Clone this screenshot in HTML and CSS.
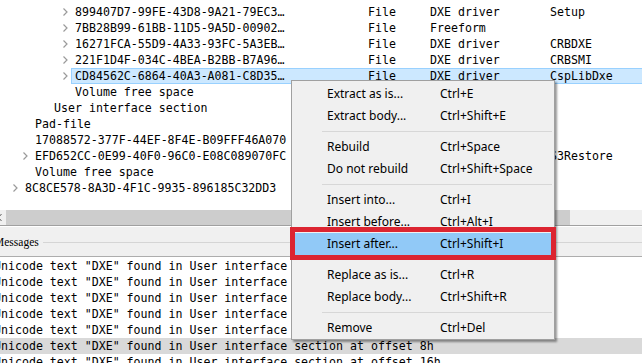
FILE: index.html
```html
<!DOCTYPE html>
<html lang="en">
<head>
    <meta charset="UTF-8">
    <title>UEFITool</title>
    <link rel="stylesheet" href="styles.css">
</head>
<body>
    <div class="tree">
        <div class="rows">
            <div class="row"><div class="name l3"><span class="arrow"><svg width="8" height="16"><polyline points="0.5,4.5 4,8 0.5,11.5"/></svg></span><span class="label"></span></div><div class="cell"></div><div class="cell"></div><div class="cell"></div><div class="cell"></div></div>
            <div class="row"><div class="name l3"><span class="arrow"><svg width="8" height="16"><polyline points="0.5,4.5 4,8 0.5,11.5"/></svg></span><span class="label">899407D7-99FE-43D8-9A21-79EC328CAC21</span></div><div class="cell"></div><div class="cell">File</div><div class="cell">DXE driver</div><div class="cell">Setup</div></div>
            <div class="row"><div class="name l3"><span class="arrow"><svg width="8" height="16"><polyline points="0.5,4.5 4,8 0.5,11.5"/></svg></span><span class="label">7BB28B99-61BB-11D5-9A5D-0090273FC14D</span></div><div class="cell"></div><div class="cell">File</div><div class="cell">Freeform</div><div class="cell"></div></div>
            <div class="row"><div class="name l3"><span class="arrow"><svg width="8" height="16"><polyline points="0.5,4.5 4,8 0.5,11.5"/></svg></span><span class="label">16271FCA-55D9-4A33-93FC-5A3EB128DEB6</span></div><div class="cell"></div><div class="cell">File</div><div class="cell">DXE driver</div><div class="cell">CRBDXE</div></div>
            <div class="row"><div class="name l3"><span class="arrow"><svg width="8" height="16"><polyline points="0.5,4.5 4,8 0.5,11.5"/></svg></span><span class="label">221F1D4F-034C-4BEA-B2BB-B7A9672B06D7</span></div><div class="cell"></div><div class="cell">File</div><div class="cell">DXE driver</div><div class="cell">CRBSMI</div></div>
            <div class="row sel"><div class="name l3"><span class="arrow"><svg width="8" height="16"><polyline points="0.5,4.5 4,8 0.5,11.5"/></svg></span><span class="label">CD84562C-6864-40A3-A081-C8D35E82B920</span></div><div class="cell"></div><div class="cell">File</div><div class="cell">DXE driver</div><div class="cell">CspLibDxe</div></div>
            <div class="row"><div class="name l3"><span class="arrow"></span><span class="label">Volume free space</span></div><div class="cell"></div><div class="cell"></div><div class="cell"></div><div class="cell"></div></div>
            <div class="row"><div class="name l2"><span class="arrow"></span><span class="label">User interface section</span></div><div class="cell"></div><div class="cell"></div><div class="cell"></div><div class="cell"></div></div>
            <div class="row"><div class="name l1"><span class="arrow"></span><span class="label">Pad-file</span></div><div class="cell"></div><div class="cell"></div><div class="cell"></div><div class="cell"></div></div>
            <div class="row"><div class="name l1"><span class="arrow"></span><span class="label">17088572-377F-44EF-8F4E-B09FFF46A070</span></div><div class="cell"></div><div class="cell"></div><div class="cell"></div><div class="cell"></div></div>
            <div class="row"><div class="name l1"><span class="arrow"><svg width="8" height="16"><polyline points="0.5,4.5 4,8 0.5,11.5"/></svg></span><span class="label">EFD652CC-0E99-40F0-96C0-E08C089070FC</span></div><div class="cell"></div><div class="cell"></div><div class="cell"></div><div class="cell">S3Restore</div></div>
            <div class="row"><div class="name l1"><span class="arrow"></span><span class="label">Volume free space</span></div><div class="cell"></div><div class="cell"></div><div class="cell"></div><div class="cell"></div></div>
            <div class="row"><div class="name l0"><span class="arrow"><svg width="8" height="16"><polyline points="0.5,4.5 4,8 0.5,11.5"/></svg></span><span class="label">8C8CE578-8A3D-4F1C-9935-896185C32DD3</span></div><div class="cell"></div><div class="cell"></div><div class="cell"></div><div class="cell"></div></div>
        </div>
    </div>

    <div class="hscroll">
        <span class="scroll-arrow"><svg width="6" height="15"><polyline points="3.5,4 0.5,7.5 3.5,11"/></svg></span>
        <span class="thumb"></span>
    </div>

    <div class="messages">
        <div class="group-title"><span>Messages</span><span class="group-line"></span></div>
        <div class="msg-list">
            <div class="msg">Unicode text "DXE" found in User interface</div>
            <div class="msg">Unicode text "DXE" found in User interface</div>
            <div class="msg">Unicode text "DXE" found in User interface</div>
            <div class="msg">Unicode text "DXE" found in User interface</div>
            <div class="msg">Unicode text "DXE" found in User interface</div>
            <div class="msg current">Unicode text "DXE" found in User interface section at offset 8h</div>
            <div class="msg">Unicode text "DXE" found in User interface section at offset 16h</div>
        </div>
    </div>

    <!-- menu contextual sobre el elemento seleccionado -->
    <div class="menu">
        <div class="item"><span>Extract as is...</span><span>Ctrl+E</span></div>
        <div class="item"><span>Extract body...</span><span>Ctrl+Shift+E</span></div>
        <div class="sep"></div>
        <div class="item"><span>Rebuild</span><span>Ctrl+Space</span></div>
        <div class="item"><span>Do not rebuild</span><span>Ctrl+Shift+Space</span></div>
        <div class="sep"></div>
        <div class="item"><span>Insert into...</span><span>Ctrl+I</span></div>
        <div class="item"><span>Insert before...</span><span>Ctrl+Alt+I</span></div>
        <div class="item hover"><span>Insert after...</span><span>Ctrl+Shift+I</span></div>
        <div class="sep"></div>
        <div class="item"><span>Replace as is...</span><span>Ctrl+R</span></div>
        <div class="item"><span>Replace body...</span><span>Ctrl+Shift+R</span></div>
        <div class="sep"></div>
        <div class="item"><span>Remove</span><span>Ctrl+Del</span></div>
    </div>
    <div class="mark"></div>
</body>
</html>
```

FILE: styles.css
```css
html, body {
    margin: 0;
    padding: 0;
    width: 642px;
    height: 363px;
    overflow: hidden;
    background: #fff;
}

body {
    font-family: "DejaVu Sans Mono", "Liberation Mono", monospace;
    font-size: 11.6px;
    color: #000;
}

/* arbol */
.tree {
    height: 210px;
    overflow: hidden;
    background: #fff;
}

.rows {
    margin-top: -12px;
}

.row {
    display: grid;
    grid-template-columns: 290px 72px 62px 120px 1fr;
    height: 16px;
    line-height: 16px;
    white-space: nowrap;
}

.name {
    display: flex;
    min-width: 0;
}

.name.l0 { padding-left: 13px; }
.name.l1 { padding-left: 23px; }
.name.l2 { padding-left: 42px; }
.name.l3 { padding-left: 63px; }

.arrow {
    flex: none;
    width: 8px;
    height: 16px;
}

.arrow svg {
    display: block;
}

.arrow polyline {
    fill: none;
    stroke: #9a9a9a;
    stroke-width: 1.2;
}

.label {
    flex: 1;
    min-width: 0;
    padding-left: 4px;
    overflow: hidden;
    text-overflow: ellipsis;
}

.cell {
    padding-left: 6px;
    overflow: hidden;
}

.row.sel .label,
.row.sel .cell {
    background: #cce8ff;
    border-top: 1px solid #99d1ff;
    border-bottom: 1px solid #99d1ff;
    line-height: 14px;
}

.row.sel .label {
    border-left: 1px solid #99d1ff;
    padding-left: 3px;
}

/* barra de desplazamiento */
.hscroll {
    display: flex;
    height: 15px;
    background: #f0f0f0;
    border-bottom: 1px solid #a0a0a0;
}

.scroll-arrow {
    width: 8px;
    margin-left: -2px;
}

.scroll-arrow polyline {
    fill: none;
    stroke: #606060;
    stroke-width: 1;
}

.thumb {
    width: 564px;
    background: #cdcdcd;
}

/* mensajes */
.messages {
    background: #f0f0f0;
    border-top: 1px solid #fff;
}

.group-title {
    display: flex;
    align-items: center;
    height: 28px;
    padding-top: 1px;
    margin-left: -6px;
    font-family: "Liberation Serif", serif;
    font-size: 11.5px;
    border-bottom: 1px solid #adadad;
}

.group-line {
    flex: 1;
    height: 1px;
    margin-left: 4px;
    background: #d5d5d5;
}

.msg-list {
    background: #fff;
    padding-top: 1px;
    height: 110px;
}

.msg {
    height: 16px;
    line-height: 16px;
    text-indent: -6px;
    white-space: nowrap;
}

.msg.current {
    background: #d9d9d9;
}

/* menu contextual */
.menu {
    position: absolute;
    left: 291px;
    top: 80px;
    width: 264px;
    box-sizing: border-box;
    padding-top: 2px;
    background: #f0f0f0;
    border: 1px solid #a0a0a0;
    box-shadow: 2px 2px 2px rgba(0, 0, 0, 0.4);
    font-family: "Noto Sans", "Open Sans", sans-serif;
    font-size: 12px;
    color: #000;
}

.item {
    display: grid;
    grid-template-columns: 113px 1fr;
    height: 22px;
    line-height: 22px;
    margin: 0 2px;
    padding-left: 33px;
    white-space: nowrap;
}

.item.hover {
    background: #91c9f7;
}

.sep {
    height: 1px;
    margin: 4px 2px 4px 30px;
    background: #d7d7d7;
}

.mark {
    position: absolute;
    left: 290px;
    top: 227px;
    width: 266px;
    height: 33px;
    box-sizing: border-box;
    border: 5px solid #dc2531;
}
```
